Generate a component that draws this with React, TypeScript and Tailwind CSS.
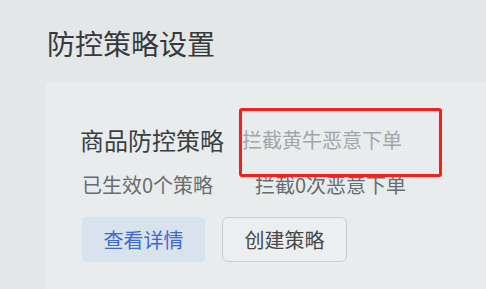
import React from 'react';

const font = { fontFamily: '"Noto Sans CJK SC", "Noto Sans", sans-serif' };

const App: React.FC = () => {
  return (
    <div
      className="relative w-[486px] h-[289px] overflow-hidden bg-[#e3e7e7]"
      style={font}
    >
      {/* page title */}
      <div className="pt-[28px] pl-[47px]">
        <h1 className="text-[28px] leading-[30px] font-normal text-[#37393b]">防控策略设置</h1>
      </div>

      {/* card */}
      <div className="mt-[24px] ml-[45px] h-[300px] bg-[#e8ecec] pl-[35px] pt-[44px]">
        <div className="flex items-center">
          <span className="text-[24px] leading-[28px] text-[#3c3f41]">商品防控策略</span>
          <span className="ml-[18px] text-[20px] leading-[28px] text-[#a2a6a9]">拦截黄牛恶意下单</span>
        </div>
        <div className="flex items-center mt-[20px] pl-[2px]">
          <span className="w-[173px] text-[20px] leading-[22px] text-[#686c6f]">已生效0个策略</span>
          <span className="text-[20px] leading-[22px] text-[#686c6f]">拦截0次恶意下单</span>
        </div>
        <div className="flex items-center gap-[17px] mt-[21px] pl-[2px]">
          <button className="w-[123px] h-[45px] rounded-[4px] bg-[#d9e3ee] text-[20px] text-[#3c6ad2]">
            查看详情
          </button>
          <button className="w-[125px] h-[45px] rounded-[6px] border border-[#c9cdce] bg-[#ecefef] text-[20px] text-[#45484a]">
            创建策略
          </button>
        </div>
      </div>

      {/* red highlight annotation */}
      <div className="absolute left-[239px] top-[108px] w-[203px] h-[69px] rounded-[3px] border-[3px] border-[#f5201c]" />
    </div>
  );
};

export default App;
